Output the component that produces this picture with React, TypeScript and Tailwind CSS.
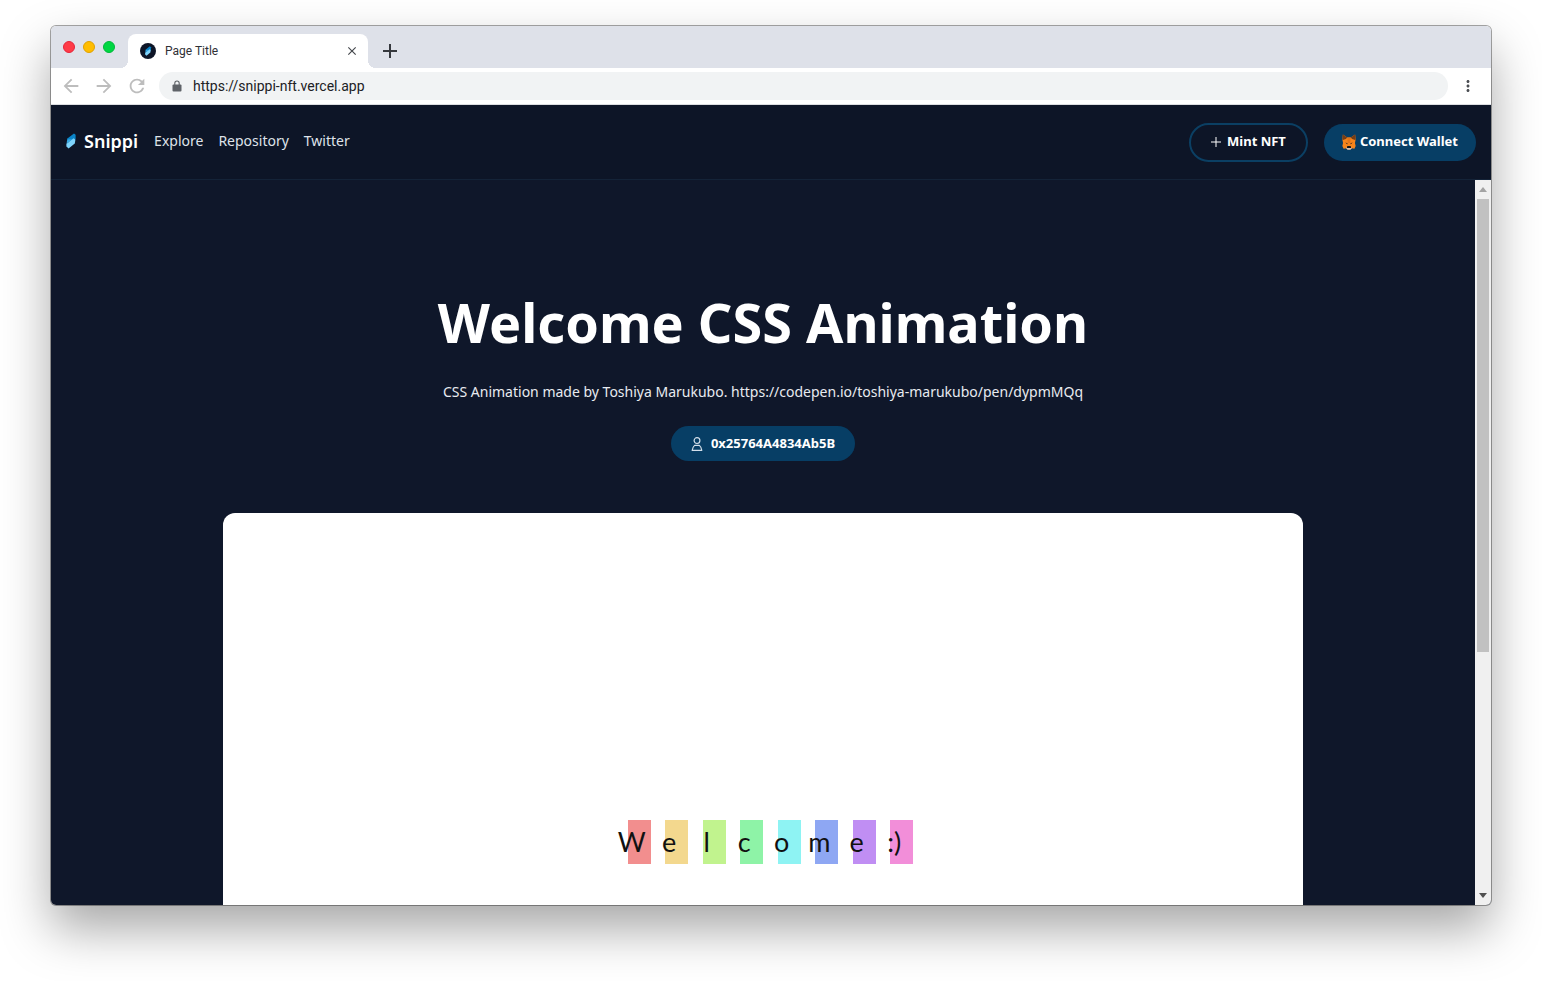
import type { ReactNode } from "react";
import { MdArrowBack, MdArrowForward, MdClose, MdMoreVert, MdRefresh } from "react-icons/md";

const letters = [
  { char: "W", tint: "bg-[#f28e8e]" },
  { char: "e", tint: "bg-[#f3d88e]" },
  { char: "l", tint: "bg-[#c1f38e]" },
  { char: "c", tint: "bg-[#8ef3a7]" },
  { char: "o", tint: "bg-[#8ef3f3]" },
  { char: "m", tint: "bg-[#8ea7f3]" },
  { char: "e", tint: "bg-[#c08ef3]" },
  { char: ":)", tint: "bg-[#f28ed9]" },
];

const links = ["Explore", "Repository", "Twitter"];

function SnippiMark({ className }: { className: string }) {
  return (
    <svg viewBox="0 0 10 16" className={className} aria-hidden="true">
      <path d="M8 .4 9.6 1.8v4.4L5.4 10 1 7.6V5.8z" fill="#0a84c8" />
      <path d="M7.6 5.2 9.4 6.8 8.8 10.4 2.6 15.6.4 13.6V10.8z" fill="#7dd3fc" />
      <path d="M1 7.4 2.6 6.2 6 6.6.6 10.8z" fill="#38a9e4" />
    </svg>
  );
}

function Fox() {
  return (
    <svg viewBox="0 0 16 16" preserveAspectRatio="none" className="h-4 w-[14px]" aria-hidden="true">
      <path d="M1 .4 6 3.4h4L15 .4l.6 5-.8 3.6.8 3-1.4 2.8-3-.6-1.6 1.4H6.4l-1.6-1.4-3 .6L.4 12l.8-3L.4 5.4z" fill="#f6851b" />
      <path d="M1 .4 6 3.4 4.4 5 1 6 .4 5.4zM15 .4 10 3.4 11.6 5l3.4 1 .6-.6z" fill="#763d16" />
      <path d="M6 3.4h4l-.6 5.6H6.6z" fill="#e2761b" />
      <path d="M3.8 8.4 6.4 9.2 6 10.6zM12.2 8.4 9.6 9.2l.4 1.4z" fill="#3a2a20" />
      <path d="M4.8 14.2 6 12.4h4l1.2 1.8L9.6 15.8H6.4z" fill="#d7c1b3" />
      <path d="M6 12h4l.4 2H5.6z" fill="#161616" />
    </svg>
  );
}

function Person() {
  return (
    <svg viewBox="0 0 12 16" className="h-4 w-3" fill="none" stroke="#d3dfea" strokeWidth="1.2" strokeLinejoin="round" aria-hidden="true">
      <circle cx="6" cy="4.6" r="2.9" />
      <path d="M3.6 9.4h4.8c1 .8 2 2.6 2.4 5H1.2c.4-2.4 1.4-4.2 2.4-5z" />
    </svg>
  );
}

function Lock() {
  return (
    <svg viewBox="0 0 10 12" className="h-3 w-2.5" aria-hidden="true">
      <rect x=".5" y="4.4" width="9" height="7.1" rx="1" fill="#5f6368" />
      <path d="M2.8 5V3.2a2.2 2.2 0 0 1 4.4 0V5" fill="none" stroke="#5f6368" strokeWidth="1.1" />
    </svg>
  );
}

function Plus({ className, width }: { className: string; width: number }) {
  return (
    <svg viewBox="0 0 14 14" className={className} stroke="currentColor" strokeWidth={width} aria-hidden="true">
      <path d="M7 0v14M0 7h14" />
    </svg>
  );
}

function IconButton({ label, className, children }: { label: string; className: string; children: ReactNode }) {
  return (
    <button type="button" aria-label={label} className={`flex items-center justify-center ${className}`}>
      {children}
    </button>
  );
}

function TabStrip() {
  return (
    <div className="flex h-[42px] bg-[#dee1e9] pl-3">
      <div className="flex items-center gap-2">
        <button type="button" aria-label="Close window" className="h-3 w-3 rounded-full border border-[#e5243b] bg-[#ff3b47]" />
        <button type="button" aria-label="Minimize window" className="h-3 w-3 rounded-full border border-[#e0a100] bg-[#ffbd00]" />
        <button type="button" aria-label="Zoom window" className="h-3 w-3 rounded-full border border-[#00b83a] bg-[#00d742]" />
      </div>
      <div className="relative mt-2 ml-[13px] flex w-60 items-center rounded-t-lg bg-white px-3">
        <span className="absolute bottom-0 -left-2 h-2 w-2 bg-[radial-gradient(circle_at_0_0,transparent_8px,white_8px)]" />
        <span className="absolute -right-2 bottom-0 h-2 w-2 bg-[radial-gradient(circle_at_100%_0,transparent_8px,white_8px)]" />
        <span className="flex h-4 w-4 items-center justify-center rounded-full bg-[#0d1527]">
          <SnippiMark className="h-[10px] w-2" />
        </span>
        <span className="ml-[9px] flex-1 text-xs text-[#2f3136]">Page Title</span>
        <IconButton label="Close tab" className="-mr-[3px] text-[#45484d]">
          <MdClose className="h-[14px] w-[14px]" />
        </IconButton>
      </div>
      <IconButton label="New tab" className="mt-2 ml-[15px] text-[#35383d]">
        <Plus className="h-[14px] w-[14px]" width={2} />
      </IconButton>
    </div>
  );
}

function Toolbar() {
  return (
    <div className="flex h-[37px] items-center border-b border-[#dcdee1] bg-white pl-[9px]">
      <div className="flex items-center gap-[11px] text-[#bdbdbd]">
        <IconButton label="Back" className="h-[22px] w-[22px]"><MdArrowBack className="h-[22px] w-[22px]" /></IconButton>
        <IconButton label="Forward" className="h-[22px] w-[22px]"><MdArrowForward className="h-[22px] w-[22px]" /></IconButton>
        <IconButton label="Reload" className="h-[22px] w-[22px]"><MdRefresh className="h-[22px] w-[22px]" /></IconButton>
      </div>
      <label className="ml-[11px] flex h-7 flex-1 items-center rounded-full bg-[#f1f3f4] pr-4 pl-[13px]">
        <Lock />
        <input
          type="text"
          aria-label="Address"
          defaultValue="https://snippi-nft.vercel.app"
          className="ml-[11px] flex-1 bg-transparent text-sm text-[#202124] outline-none"
        />
      </label>
      <IconButton label="Menu" className="mr-[11px] ml-2 h-6 w-6 text-[#4a4d52]">
        <MdMoreVert className="h-[18px] w-[18px]" />
      </IconButton>
    </div>
  );
}

function NavBar() {
  return (
    <header className="flex h-[75px] items-center border-b border-[#142338] bg-[#0d1527] px-[15px] font-['Noto_Sans','Open_Sans',sans-serif]">
      <div className="flex items-center gap-4 pb-[3px]">
        <a href="#home" className="flex items-center gap-2 text-lg font-semibold text-white">
          <SnippiMark className="h-4 w-2.5" />
          Snippi
        </a>
        <nav className="flex gap-[15px] text-sm text-[#dfe3ea]">
          {links.map((link) => (
            <a key={link} href={`#${link.toLowerCase()}`}>{link}</a>
          ))}
        </nav>
      </div>
      <div className="ml-auto flex items-center gap-4 text-[13px] font-bold text-white">
        <button type="button" className="flex h-[39px] items-center gap-1.5 rounded-full border-2 border-[#0b3f63] px-5">
          <Plus className="h-2.5 w-2.5" width={1.4} />
          Mint NFT
        </button>
        <button type="button" className="flex h-[37px] items-center gap-1 rounded-full bg-[#073e65] px-[18px]">
          <Fox />
          Connect Wallet
        </button>
      </div>
    </header>
  );
}

function Scrollbar() {
  return (
    <div className="flex w-4 flex-col bg-[#f0f0f0]">
      <IconButton label="Scroll up" className="h-[19px]">
        <svg viewBox="0 0 8 5" className="h-[5px] w-2" aria-hidden="true"><path d="M0 5 4 0l4 5z" fill="#a3a3a3" /></svg>
      </IconButton>
      <div className="flex-1 px-0.5">
        <div className="h-[66%] bg-[#c1c1c1]" />
      </div>
      <IconButton label="Scroll down" className="h-5">
        <svg viewBox="0 0 8 5" className="h-[5px] w-2" aria-hidden="true"><path d="M0 0h8L4 5z" fill="#505050" /></svg>
      </IconButton>
    </div>
  );
}

export default function App() {
  return (
    <div className="flex min-h-screen flex-col bg-white px-[51px] pt-[26px] pb-[76px] font-[Roboto,sans-serif]">
      <div className="flex flex-1 flex-col overflow-hidden rounded-[5px] shadow-[0_0_0_1px_rgba(0,0,0,0.35),0_24px_50px_rgba(0,0,0,0.35)]">
        <TabStrip />
        <Toolbar />
        <NavBar />
        <div className="flex flex-1 bg-[#0f172a]">
          <main className="flex flex-1 flex-col items-center pt-24 font-['Noto_Sans','Open_Sans',sans-serif]">
            <h1 className="text-center text-[54px] leading-[92px] font-bold text-white">Welcome CSS Animation</h1>
            <p className="mt-3 text-center text-sm leading-6 text-[#e8ebf0]">
              CSS Animation made by Toshiya Marukubo. https://codepen.io/toshiya-marukubo/pen/dypmMQq
            </p>
            <a href="#owner" className="mt-[22px] flex h-[35px] items-center gap-2 rounded-full bg-[#073e65] px-5 text-[13px] font-bold text-white">
              <Person />
              0x25764A4834Ab5B
            </a>
            <section className="mt-[52px] flex w-full max-w-[1080px] flex-1 flex-col items-center rounded-t-xl bg-white pt-[307px] pb-10">
              <div className="grid w-[300px] grid-cols-8 font-[Lato,sans-serif] text-[27px] leading-[44px] text-[#111111]">
                {letters.map(({ char, tint }, index) => (
                  <div key={index} className="relative text-center">
                    <span className={`absolute inset-y-0 right-0 w-[23px] ${tint}`} />
                    <span className="relative">{char}</span>
                  </div>
                ))}
              </div>
            </section>
          </main>
          <Scrollbar />
        </div>
      </div>
    </div>
  );
}
